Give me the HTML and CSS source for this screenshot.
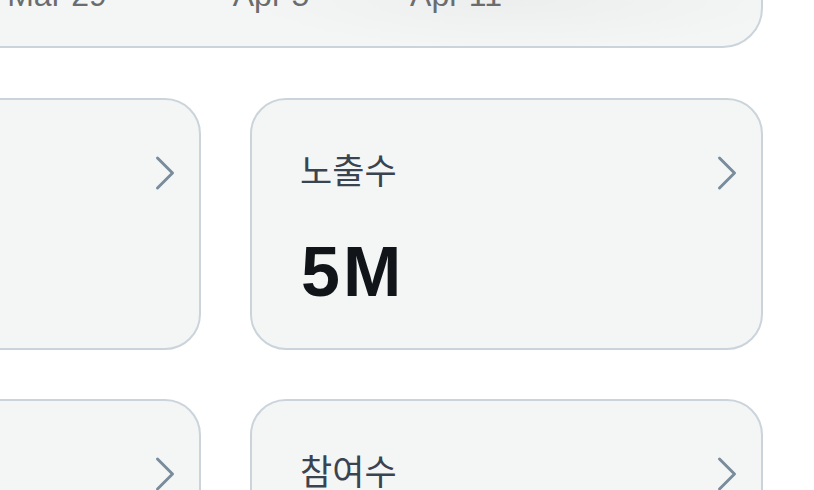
FILE: index.html
```html
<!DOCTYPE html>
<html lang="ko">
<head>
<meta charset="utf-8">
<title>Stats</title>
<link rel="stylesheet" href="styles.css">
</head>
<body>
<main class="page">
  <section class="chart-card">
    <div class="axis">
      <div class="tick" style="width:214px"><span class="tick-label">Mar 29</span></div>
      <div class="tick" style="width:185px"><span class="tick-label">Apr 5</span></div>
      <div class="tick" style="width:185px"><span class="tick-label">Apr 11</span></div>
    </div>
  </section>

  <section class="grid">
    <a class="stat-card" href="#">
      <div class="stat-head">
        <span class="stat-label">도달수</span>
        <svg class="chev" width="20" height="36" viewBox="0 0 20 36"><polyline points="2.5,3 17.5,18 2.5,33"/></svg>
      </div>
      <div class="stat-value">2M</div>
    </a>
    <a class="stat-card" href="#">
      <div class="stat-head">
        <span class="stat-label">노출수</span>
        <svg class="chev" width="20" height="36" viewBox="0 0 20 36"><polyline points="2.5,3 17.5,18 2.5,33"/></svg>
      </div>
      <div class="stat-value">5M</div>
    </a>
    <a class="stat-card" href="#">
      <div class="stat-head">
        <span class="stat-label">클릭수</span>
        <svg class="chev" width="20" height="36" viewBox="0 0 20 36"><polyline points="2.5,3 17.5,18 2.5,33"/></svg>
      </div>
      <div class="stat-value">80K</div>
    </a>
    <a class="stat-card" href="#">
      <div class="stat-head">
        <span class="stat-label">참여수</span>
        <svg class="chev" width="20" height="36" viewBox="0 0 20 36"><polyline points="2.5,3 17.5,18 2.5,33"/></svg>
      </div>
      <div class="stat-value">120K</div>
    </a>
  </section>
</main>
</body>
</html>
```

FILE: styles.css
```css
html, body {
  margin: 0;
  padding: 0;
  background: #ffffff;
  overflow: hidden;
}

body {
  font-family: "Liberation Sans", "Noto Sans CJK KR", sans-serif;
}

.page {
  width: 1075px;
  margin-left: -312px;
  margin-top: -252px;
  display: flex;
  flex-direction: column;
  gap: 50px;
}

.chart-card {
  height: 300px;
  box-sizing: border-box;
  border: 2px solid #cbd4db;
  border-radius: 40px;
  background-color: #f4f6f6;
  background-image: radial-gradient(ellipse 280px 50px at 830px 250px, rgba(0, 0, 0, 0.03), rgba(0, 0, 0, 0));
  display: flex;
  flex-direction: column;
  justify-content: flex-end;
  padding-bottom: 33px;
}

.axis {
  display: flex;
  padding-left: 367px;
}

.tick {
  position: relative;
  height: 36px;
}

.tick-label {
  position: absolute;
  left: 0;
  top: 0;
  transform: translateX(-50%);
  white-space: nowrap;
  font-family: "Liberation Sans", sans-serif;
  font-size: 32px;
  line-height: 36px;
  color: #6a6c6e;
}

.grid {
  display: grid;
  grid-template-columns: 513px 513px;
  column-gap: 49px;
  row-gap: 49px;
}

.stat-card {
  display: block;
  height: 252px;
  box-sizing: border-box;
  border: 2px solid #cbd4db;
  border-radius: 36px;
  background: #f4f6f6;
  padding: 49px 24px 0 48px;
  text-decoration: none;
}

.stat-head {
  display: flex;
  justify-content: space-between;
  align-items: center;
  height: 40px;
}

.stat-label {
  font-family: "Noto Sans CJK KR", sans-serif;
  font-size: 35px;
  line-height: 40px;
  color: #3a4350;
}

.chev {
  margin-top: 7px;
  fill: none;
  stroke: #7a8c9b;
  stroke-width: 3;
  stroke-linecap: round;
  stroke-linejoin: round;
}

.stat-value {
  margin-top: 48px;
  padding-left: 1px;
  font-family: "Liberation Sans", sans-serif;
  font-weight: 700;
  font-size: 70px;
  line-height: 70px;
  letter-spacing: 3px;
  color: #111519;
}
```
